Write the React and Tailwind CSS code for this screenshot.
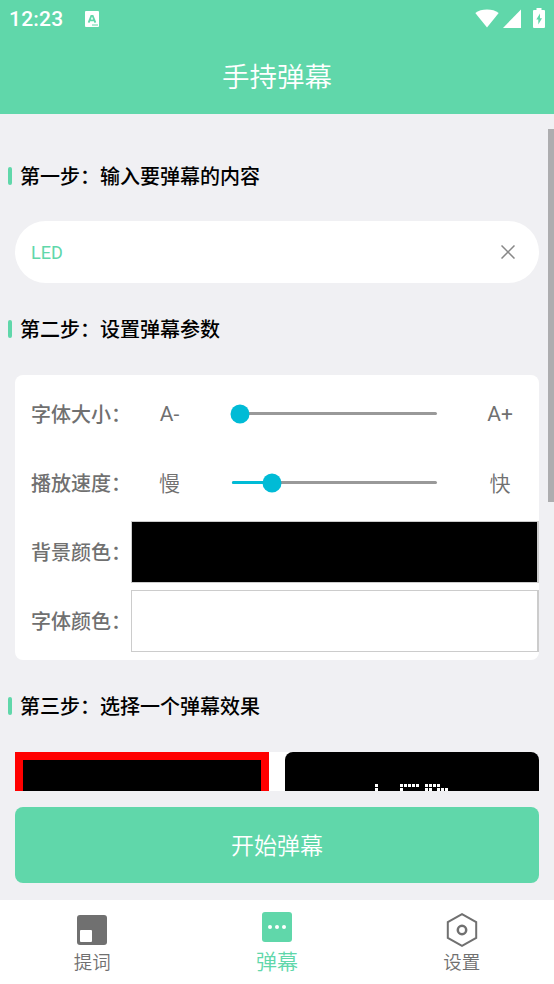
import React from "react";

const LED_DOTS = [
  [0, 0], [0, 1],
  [25, 0], [29, 0], [33, 0], [37, 0], [41, 0], [25, 1],
  [50, 0], [54, 0], [58, 0], [62, 0],
  [50, 1], [54, 1], [62, 1], [66, 1], [70, 1],
];

function StatusBar() {
  return (
    <div className="flex h-[38px] items-center pl-[9px] pr-[9px] text-white">
      <span className="w-[55px] font-[Roboto] text-[21px] font-medium leading-[22px] tracking-[0.2px]">12:23</span>
      <svg className="ml-[21px]" width="14" height="16" viewBox="0 0 14 16">
        <rect width="14" height="16" rx="1" fill="#fff" />
        <path d="M3.600 11.700 6.300 4.800h1.400l2.700 6.900M4.700 9.300h4.400" fill="none" stroke="#60d7aa" strokeWidth="1.800" />
        <path d="M7 14h6" stroke="#60d7aa" strokeWidth="1" />
      </svg>
      <svg className="mb-[2px] ml-auto" width="24" height="19" viewBox="0 0 24 19">
        <path d="M12 18.500.3 4C6-.6 18-.6 23.700 4Z" fill="#fff" />
      </svg>
      <svg className="mb-[1px] ml-[4px]" width="18" height="19" viewBox="0 0 18 19">
        <path d="M18 0.500V19H0Z" fill="#fff" />
      </svg>
      <svg className="mb-[2px] ml-[12px]" width="12" height="20" viewBox="0 0 12 20">
        <path d="M3.500 0h5v2H11a1 1 0 0 1 1 1v16a1 1 0 0 1-1 1H1a1 1 0 0 1-1-1V3a1 1 0 0 1 1-1h2.500Z" fill="#fff" />
        <path d="M7 5.500 3.300 11.500h2V16.500L9 10.300H7Z" fill="#60d7aa" />
      </svg>
    </div>
  );
}

function StepTitle({ children }) {
  return (
    <h2 className="flex h-[30px] items-center pl-[8px] text-[20px] font-medium text-black">
      <span className="mr-[8px] h-[18px] w-[4px] rounded-[2px] bg-[#60d7aa]" />
      {children}
    </h2>
  );
}

function Label({ children }) {
  return <span className="w-[116px] shrink-0 pl-[16px] text-[20px] font-medium">{children}</span>;
}

function SliderRow({ label, min, max, value }) {
  return (
    <div className="flex h-[69px] items-center">
      <Label>{label}</Label>
      <span className="w-[77px] text-center text-[21px]">{min}</span>
      <div className="relative ml-[24px] h-[3px] w-[205px] rounded-full bg-[#999]">
        <div className="h-full rounded-full bg-[#00bbd6]" style={{ width: value }} />
        <div
          className="absolute top-1/2 size-[19px] -translate-x-1/2 -translate-y-1/2 rounded-full bg-[#00bbd6]"
          style={{ left: value }}
        />
      </div>
      <span className="ml-[24px] w-[78px] text-center text-[21px]">{max}</span>
    </div>
  );
}

function ColorRow({ label, swatch }) {
  return (
    <div className="flex h-[69px] items-center">
      <Label>{label}</Label>
      <div className={`h-[62px] flex-1 border border-r-2 border-[#ccc] ${swatch}`} />
    </div>
  );
}

function NavItem({ label, active, children }) {
  return (
    <div
      className={
        active
          ? "flex flex-1 flex-col items-center pt-[12px] text-[21px] text-[#60d7aa]"
          : "flex flex-1 flex-col items-center pt-[13px] text-[18.5px] text-[#707070]"
      }
    >
      {children}
      <span className={active ? "mt-[3px] leading-[30px]" : "-mt-[1px] leading-[30px]"}>{label}</span>
    </div>
  );
}

export default function App() {
  return (
    <div className="relative flex h-[984px] w-[554px] flex-col overflow-hidden bg-[#f0f0f3] font-['Noto_Sans_CJK_SC',sans-serif] font-[350] text-[#707070]">
      <header className="h-[114px] shrink-0 bg-[#60d7aa]">
        <StatusBar />
        <h1 className="text-center text-[27.5px] leading-[74px] text-white">手持弹幕</h1>
      </header>

      <main className="h-[677px] shrink-0 overflow-hidden pt-[47px]">
        <StepTitle>第一步：输入要弹幕的内容</StepTitle>
        <div className="mx-[15px] mt-[30px] flex h-[62px] items-center justify-between rounded-full bg-white pl-[16px] pr-[24px]">
          <span className="font-[Roboto] text-[18px] font-normal text-[#60d7aa]">LED</span>
          <svg width="14" height="14" viewBox="0 0 14 14">
            <path d="M0.500 0.500l13 13M13.500 0.500l-13 13" stroke="#888" strokeWidth="1.500" />
          </svg>
        </div>

        <div className="mt-[31px]">
          <StepTitle>第二步：设置弹幕参数</StepTitle>
        </div>
        <div className="mx-[15px] mt-[31px] h-[285px] rounded-[8px] bg-white pt-[4px]">
          <SliderRow label="字体大小：" min={<span className="font-[Roboto] font-normal">A-</span>} max={<span className="font-[Roboto] font-normal">A+</span>} value={8} />
          <SliderRow label="播放速度：" min="慢" max="快" value={40} />
          <ColorRow label="背景颜色：" swatch="bg-black" />
          <ColorRow label="字体颜色：" swatch="bg-white" />
        </div>

        <div className="mt-[31px]">
          <StepTitle>第三步：选择一个弹幕效果</StepTitle>
        </div>
        <div className="mx-[15px] mt-[31px] flex justify-between rounded-[8px] bg-white">
          <div className="h-[120px] w-[254px] border-8 border-[#f00] bg-black" />
          <div className="h-[120px] w-[254px] rounded-[8px] bg-black pl-[90px] pt-[32px]">
            <svg width="74" height="8" viewBox="0 0 74 8" shapeRendering="crispEdges">
              {LED_DOTS.map(([x, row]) => (
                <rect key={`${x}-${row}`} x={x} y={row * 4} width="3" height="3" fill="#fff" />
              ))}
            </svg>
          </div>
        </div>
      </main>

      <button className="mx-[15px] mt-[16px] h-[76px] shrink-0 rounded-[8px] bg-[#60d7aa] pb-[2px] text-[23px] text-white">
        开始弹幕
      </button>

      <nav className="mt-auto flex h-[84px] shrink-0 bg-white">
        <NavItem label="提词">
          <svg className="mt-[2px] mb-[2px]" width="30" height="30" viewBox="0 0 30 30">
            <rect width="30" height="30" rx="3" fill="#707070" />
            <rect x="3" y="15" width="12" height="12" rx="1" fill="#fff" />
          </svg>
        </NavItem>
        <NavItem label="弹幕" active>
          <svg width="30" height="30" viewBox="0 0 30 30">
            <rect width="30" height="30" rx="3" fill="#60d7aa" />
            <circle cx="8" cy="15" r="2" fill="#fff" />
            <circle cx="15" cy="15" r="2" fill="#fff" />
            <circle cx="22" cy="15" r="2" fill="#fff" />
          </svg>
        </NavItem>
        <NavItem label="设置">
          <svg width="32" height="34" viewBox="0 0 32 34" fill="none" stroke="#707070" strokeWidth="2">
            <path d="M16 1.200 30.200 9v16L16 32.800 1.800 25V9Z" />
            <circle cx="16" cy="17" r="4.200" strokeWidth="2.500" />
          </svg>
        </NavItem>
      </nav>

      <div className="absolute right-0 top-[129px] h-[373px] w-[6px] bg-[#adadaf]" />
    </div>
  );
}
